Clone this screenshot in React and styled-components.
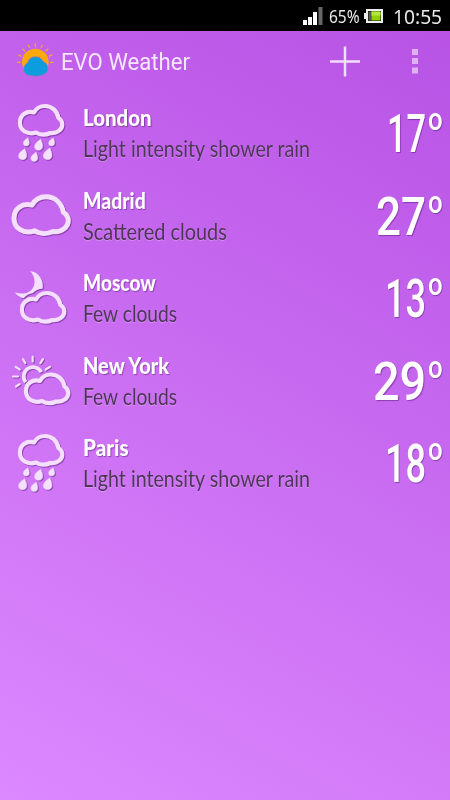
import React, { useLayoutEffect, useRef, useState } from "react";
import styled, { createGlobalStyle } from "styled-components";

const GlobalStyle = createGlobalStyle`
  * { box-sizing: border-box; }
  body { margin: 0; background: #000; font-family: Roboto, sans-serif; }
`;

const Screen = styled.div`
  width: 450px;
  height: 800px;
  display: flex;
  flex-direction: column;
  overflow: hidden;
  background: #000;
`;

const StatusBar = styled.div`
  height: 31px;
  flex: none;
  display: flex;
  align-items: center;
  justify-content: flex-end;
  padding: 1px 8px 0 0;
  color: #e8e8e8;
  font-family: "Noto Sans", sans-serif;
`;

const Signal = styled.svg`
  width: 20px;
  height: 18px;
  margin-right: 6px;
`;

const Battery = styled.svg`
  width: 20px;
  height: 16px;
  margin: 0 9px 0 4px;
`;

const Main = styled.main`
  flex: 1;
  background: linear-gradient(30deg, #dc88ff 0%, #b853e5 100%);
`;

const Header = styled.header`
  height: 62px;
  display: flex;
  align-items: center;
  color: #f6e6fd;
`;

const Logo = styled.svg`
  width: 61px;
  height: 62px;
`;

const Action = styled.svg`
  width: 70px;
  height: 62px;
`;

const TitleArea = styled.h1`
  flex: 1;
  margin: 0;
  padding-top: 2px;
  font-weight: 400;
`;

const List = styled.ul`
  list-style: none;
  margin: 0;
  padding: 0;
`;

const Row = styled.li`
  height: 82.5px;
  display: flex;
  padding-right: 7px;
`;

const WeatherIcon = styled.svg`
  width: 75px;
  height: 82px;
  flex: none;
  margin-right: 8px;
  filter: drop-shadow(1px 1px 0.7px rgba(50, 0, 80, 0.4));
`;

const Details = styled.div`
  flex: 1;
  padding-top: 9px;
`;

const Reading = styled.div`
  display: flex;
  padding-top: 10px;
  gap: 2px;
`;

const TextBox = styled.div`
  width: ${(p) => p.$width}px;
  height: ${(p) => p.$height}px;
  line-height: ${(p) => p.$height}px;
  font-size: ${(p) => p.$size}px;
  font-weight: ${(p) => p.$weight || 400};
  white-space: nowrap;
`;

const City = styled(TextBox)`
  color: #fff;
  font-family: Lato, sans-serif;
  text-shadow: 1px 1px 1px rgba(50, 0, 80, 0.4);
`;

const Condition = styled(TextBox)`
  color: #4d3756;
  font-family: Lato, sans-serif;
  text-shadow: 0 1px 1px rgba(255, 255, 255, 0.25);
`;

const Temperature = styled(TextBox)`
  color: #fff;
  text-shadow: 1px 1px 1px rgba(50, 0, 80, 0.4);
`;

const Degree = styled.span`
  width: 15px;
  height: 19px;
  margin-top: 7px;
`;

const Stretch = styled.span`
  display: inline-block;
  transform-origin: 0 50%;
`;

function Fit({ as: Box = TextBox, width, height, size, weight, children }) {
  const ref = useRef(null);
  const [scale, setScale] = useState(1);
  useLayoutEffect(() => {
    setScale(width / ref.current.offsetWidth);
  }, [width, children]);
  return (
    <Box $width={width} $height={height} $size={size} $weight={weight}>
      <Stretch ref={ref} style={{ transform: `scaleX(${scale})` }}>{children}</Stretch>
    </Box>
  );
}

const CLOUD =
  "M96 80C66 72 42 91 42 119C42 149 70 168 104 157C120 167 142 167 159 159C185 163 205 145 205 126C205 112 197 106 190 101C186 75 165 55 138 55C119 55 104 65 96 80Z";

function Cloud({ x, y, scale = 0.78, stroke = 16 }) {
  return (
    <path
      d={CLOUD}
      transform={`translate(${x} ${y}) scale(${scale})`}
      fill="none"
      stroke="#f4e0fd"
      strokeWidth={stroke}
      strokeLinejoin="round"
    />
  );
}

const DROPS = [
  [79, 140, 0.75],
  [116, 149, 1],
  [155, 140, 0.75],
  [68, 177, 1],
  [103, 185, 0.85],
  [143, 176, 1.05],
];

const RAYS = "M98 40V54M69 47L76 59M129 47L121 59M47 70L59 78M150 70L137 78M39 99H54M48 129L59 122";

function Icon({ kind }) {
  return (
    <WeatherIcon viewBox="0 0 225 246">
      {kind === "rain" && (
        <g transform="translate(0 6)">
          <Cloud x={27} y={-10} />
          {DROPS.map(([x, y, s]) => (
            <path
              key={x}
              transform={`translate(${x} ${y}) scale(${s})`}
              d="M6 -16C10 -8 12 -2 12 5C12 12 7 17 0 17C-8 17 -13 12 -12 4C-11 -4 -2 -10 6 -16Z"
              fill="#f4e0fd"
              stroke="#f4e0fd"
              strokeWidth="1.5"
            />
          ))}
        </g>
      )}
      {kind === "cloud" && (
        <g transform="translate(0 7.5)">
          <Cloud x={0} y={0} scale={1} stroke={15} />
        </g>
      )}
      {kind === "night" && (
        <g transform="translate(0 6)">
          <path
            d="M90 33C115 36 132 58 128 86C116 86 105 91 98 100C88 101 78 106 71 115C59 113 49 106 45 97C60 103 80 102 92 92C108 78 108 52 90 33Z"
            fill="#f4e0fd"
          />
          <Cloud x={33} y={56} />
        </g>
      )}
      {kind === "day" && (
        <g transform="translate(0 7.5)" fill="none" stroke="#f4e0fd">
          <path d="M77 116A28 28 0 1 1 124 86" strokeWidth="11" />
          <path d={RAYS} strokeWidth="6.5" strokeLinecap="round" />
          <Cloud x={45} y={50} />
        </g>
      )}
    </WeatherIcon>
  );
}

const CITIES = [
  { city: "London", cw: 69, text: "Light intensity shower rain", tw: 227, temp: "17", nw: 39, icon: "rain" },
  { city: "Madrid", cw: 63, text: "Scattered clouds", tw: 144, temp: "27", nw: 50, icon: "cloud" },
  { city: "Moscow", cw: 73, text: "Few clouds", tw: 94, temp: "13", nw: 41, icon: "night" },
  { city: "New York", cw: 86, text: "Few clouds", tw: 94, temp: "29", nw: 53, icon: "day" },
  { city: "Paris", cw: 46, text: "Light intensity shower rain", tw: 227, temp: "18", nw: 41, icon: "rain" },
];

export default function App() {
  return (
    <Screen>
      <GlobalStyle />
      <StatusBar>
        <Signal viewBox="0 0 20 18">
          <path d="M0 13h4v5H0zM5 10h4v8H5zM10 5h4v13h-4z" fill="#fff" />
          <path d="M15.500 0h4v18h-4z" fill="#666" />
        </Signal>
        <Fit width={31} height={26} size={17.5}>65%</Fit>
        <Battery viewBox="0 0 20 16">
          <path d="M3 2h15v12H3z" fill="#111" stroke="#eee" strokeWidth="2" />
          <path d="M0 5h2v6H0z" fill="#eee" />
          <path d="M4.500 3.500h3v9h-3z" fill="#555" />
          <path d="M7.500 3.500h9v9h-9z" fill="#8fd000" />
          <path d="M7.500 3.500h9v4h-9z" fill="#b5e83d" />
        </Battery>
        <Fit width={49} height={27} size={20}>10:55</Fit>
      </StatusBar>
      <Main>
        <Header>
          <Logo viewBox="0 3 183 186">
            <path
              d="M106 40V51M85 44L89 54M127 44L123 54M67 56L75 64M145 56L137 64M55 74L65 79M157 74L147 79M51 97H62M150 97H161"
              stroke="#f2a33a"
              strokeWidth="4"
            />
            <circle cx="106" cy="96" r="40" fill="#fba80a" />
            <path
              d="M83 136C68 130 66 107 83 98C87 76 121 75 129 94C148 101 149 127 131 134C116 140 96 139 83 136Z"
              fill="#0b9ddd"
              stroke="#bd68ba"
              strokeWidth="2"
            />
          </Logo>
          <TitleArea>
            <Fit width={129} height={62} size={23}>EVO Weather</Fit>
          </TitleArea>
          <Action viewBox="0 0 70 62">
            <path d="M20 30.500H50M35 15.500V45.500" stroke="#f3def9" strokeWidth="2.500" />
          </Action>
          <Action viewBox="0 0 70 62">
            <path d="M32 18h6v6h-6zM32 27h6v6h-6zM32 36.500h6v6h-6z" fill="#e0b0f4" />
          </Action>
        </Header>
        <List>
          {CITIES.map((c) => (
            <Row key={c.city}>
              <Icon kind={c.icon} />
              <Details>
                <Fit as={City} width={c.cw} height={31} size={22.5} weight={900}>{c.city}</Fit>
                <Fit as={Condition} width={c.tw} height={31} size={22.5}>{c.text}</Fit>
              </Details>
              <Reading>
                <Fit as={Temperature} width={c.nw} height={62} size={53} weight={500}>{c.temp}</Fit>
                <Degree>
                  <Fit as={Temperature} width={15} height={19} size={31} weight={500}>o</Fit>
                </Degree>
              </Reading>
            </Row>
          ))}
        </List>
      </Main>
    </Screen>
  );
}
